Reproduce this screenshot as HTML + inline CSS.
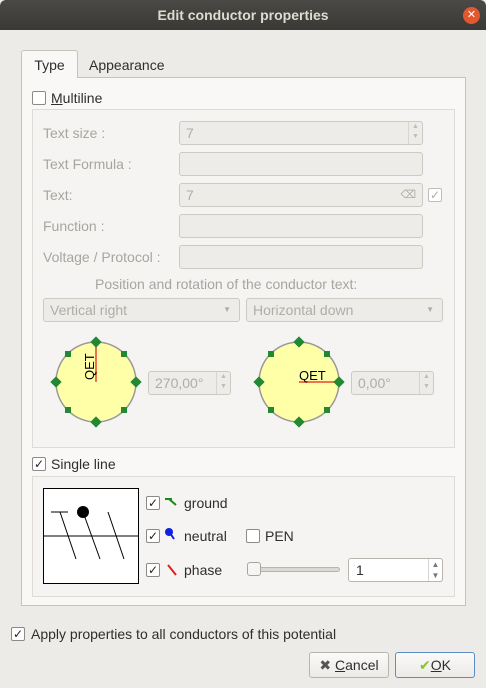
<!DOCTYPE html><html><head><style>
*{box-sizing:border-box;margin:0;padding:0}
body{width:486px;height:688px;background:#edebe8;font-family:"Liberation Sans","DejaVu Sans",sans-serif;font-size:13px;color:#2e2e2e;position:relative;overflow:hidden}
.a{position:absolute}
.title{left:0;top:0;width:486px;height:30px;background:linear-gradient(#4a4945,#3a3935);color:#dfdbd2;font-weight:bold;font-size:14px;text-align:center;line-height:30px;border-radius:6px 6px 0 0}
.close{left:463px;top:7px;width:17px;height:17px;border-radius:50%;background:#e4572e;color:#fff;font-size:11px;text-align:center;line-height:17px}
.panel{left:21px;top:77px;width:445px;height:529px;background:#faf8f6;border:1px solid #c6c2bc}
.tab{left:21px;top:50px;width:57px;height:28px;background:#faf8f6;border:1px solid #c6c2bc;border-bottom:none;border-radius:3px 3px 0 0;line-height:28px;text-align:center;font-size:14px}
.cb{width:14px;height:14px;border:1px solid #8c8a86;background:#fff;border-radius:2px;font-size:12px;line-height:12px;text-align:center;color:#222}
.grp{border:1px solid #dedad5;background:#f6f4f2}
.lbl{color:#a8a5a0;font-size:14px}
.fld{height:24px;border:1px solid #cdc9c3;background:#eeece9;border-radius:3px;color:#b0ada8;padding-left:6px;line-height:22px;font-size:14px}
.sp{position:absolute;right:0;top:0;width:14px;height:100%;border-left:1px solid #d8d4cf;font-size:7px;color:#c0bdb8;text-align:center;line-height:10px}
.btn{height:26px;border:1px solid #b8b4ae;background:linear-gradient(#fbfaf9,#eceae7);border-radius:3px;text-align:center;line-height:24px;font-size:14px}
.t{font-size:14px}
</style></head><body>
<div class="a title">Edit conductor properties</div>
<div class="a close">✕</div>
<div class="a panel"></div>
<div class="a tab">Type</div>
<div class="a t" style="left:89px;top:57px">Appearance</div>
<div class="a cb" style="left:32px;top:91px"></div>
<div class="a t" style="left:51px;top:90px"><u>M</u>ultiline</div>
<div class="a grp" style="left:32px;top:109px;width:423px;height:339px"></div>
<div class="a lbl" style="left:43px;top:125px">Text size :</div>
<div class="a fld" style="left:179px;top:121px;width:244px">7<div class="sp">▲<br>▼</div></div>
<div class="a lbl" style="left:43px;top:156px">Text Formula :</div>
<div class="a fld" style="left:179px;top:152px;width:244px"></div>
<div class="a lbl" style="left:43px;top:187px">Text:</div>
<div class="a fld" style="left:179px;top:183px;width:244px">7<span style="position:absolute;right:6px;font-size:11px">⌫</span></div>
<div class="a cb" style="left:428px;top:188px;border-color:#c0bdb8;color:#b0ada8">✓</div>
<div class="a lbl" style="left:43px;top:218px">Function :</div>
<div class="a fld" style="left:179px;top:214px;width:244px"></div>
<div class="a lbl" style="left:43px;top:249px">Voltage / Protocol :</div>
<div class="a fld" style="left:179px;top:245px;width:244px"></div>
<div class="a lbl" style="left:95px;top:276px">Position and rotation of the conductor text:</div>
<div class="a fld" style="left:43px;top:298px;width:197px">Vertical right<span style="position:absolute;right:8px;font-size:8px">▼</span></div>
<div class="a fld" style="left:246px;top:298px;width:197px">Horizontal down<span style="position:absolute;right:8px;font-size:8px">▼</span></div>
<svg class="a" style="left:50px;top:335px" width="300" height="95">
<circle cx="46" cy="47" r="40" fill="#ffffa8" stroke="#999" stroke-width="1.5"/>
<line x1="46" y1="7" x2="46" y2="47" stroke="#f07050" stroke-width="2"/>
<text x="0" y="0" transform="translate(44,45) rotate(-90)" font-size="13" font-family="Liberation Sans">QET</text>
<g fill="#228833"><rect x="42" y="3" width="8" height="8" transform="rotate(45 46 7)"/><rect x="42" y="83" width="8" height="8" transform="rotate(45 46 87)"/><rect x="2" y="43" width="8" height="8" transform="rotate(45 6 47)"/><rect x="82" y="43" width="8" height="8" transform="rotate(45 86 47)"/><rect x="15" y="16" width="6" height="6"/><rect x="71" y="16" width="6" height="6"/><rect x="15" y="72" width="6" height="6"/><rect x="71" y="72" width="6" height="6"/></g>
<circle cx="249" cy="47" r="40" fill="#ffffa8" stroke="#999" stroke-width="1.5"/>
<line x1="249" y1="47" x2="289" y2="47" stroke="#f07050" stroke-width="2"/>
<text x="249" y="45" font-size="13" font-family="Liberation Sans">QET</text>
<g fill="#228833"><rect x="245" y="3" width="8" height="8" transform="rotate(45 249 7)"/><rect x="245" y="83" width="8" height="8" transform="rotate(45 249 87)"/><rect x="205" y="43" width="8" height="8" transform="rotate(45 209 47)"/><rect x="285" y="43" width="8" height="8" transform="rotate(45 289 47)"/><rect x="218" y="16" width="6" height="6"/><rect x="274" y="16" width="6" height="6"/><rect x="218" y="72" width="6" height="6"/><rect x="274" y="72" width="6" height="6"/></g>
</svg>
<div class="a fld" style="left:148px;top:371px;width:83px">270,00°<div class="sp">▲<br>▼</div></div>
<div class="a fld" style="left:351px;top:371px;width:83px">0,00°<div class="sp">▲<br>▼</div></div>
<div class="a cb" style="left:32px;top:457px">✓</div>
<div class="a t" style="left:51px;top:456px">Single line</div>
<div class="a grp" style="left:32px;top:476px;width:423px;height:121px"></div>
<svg class="a" style="left:43px;top:488px" width="96" height="96">
<rect x="0.5" y="0.5" width="95" height="95" fill="#fff" stroke="#000"/>
<line x1="0" y1="48" x2="96" y2="48" stroke="#000"/>
<line x1="8" y1="24" x2="25" y2="24" stroke="#000"/>
<line x1="17" y1="24" x2="33" y2="71" stroke="#000"/>
<line x1="40" y1="24" x2="57" y2="71" stroke="#000"/>
<circle cx="40" cy="24" r="6" fill="#000"/>
<line x1="65" y1="24" x2="81" y2="71" stroke="#000"/>
</svg>
<div class="a cb" style="left:146px;top:496px">✓</div>
<svg class="a" style="left:164px;top:496px" width="14" height="12"><path d="M1 3H8M5 3L12 9" stroke="#1a8a1a" stroke-width="2" fill="none"/></svg>
<div class="a t" style="left:184px;top:495px">ground</div>
<div class="a cb" style="left:146px;top:529px">✓</div>
<svg class="a" style="left:164px;top:527px" width="14" height="16"><circle cx="5" cy="5" r="4" fill="#1020e0"/><path d="M6 6L10 12" stroke="#1020e0" stroke-width="2"/></svg>
<div class="a t" style="left:184px;top:528px">neutral</div>
<div class="a cb" style="left:246px;top:529px"></div>
<div class="a t" style="left:265px;top:528px">PEN</div>
<div class="a cb" style="left:146px;top:563px">✓</div>
<svg class="a" style="left:166px;top:563px" width="12" height="14"><path d="M2 2L10 12" stroke="#e02020" stroke-width="2"/></svg>
<div class="a t" style="left:184px;top:562px">phase</div>
<div class="a" style="left:250px;top:567px;width:90px;height:5px;border:1px solid #b8b4ae;border-radius:3px;background:#dcd9d5"></div>
<div class="a" style="left:247px;top:562px;width:14px;height:14px;border:1px solid #a8a4a0;border-radius:3px;background:#f6f5f3"></div>
<div class="a" style="left:348px;top:558px;width:95px;height:24px;border:1px solid #b8b4ae;border-radius:3px;background:#fff;padding-left:7px;line-height:22px;font-size:14px">1<div class="sp" style="color:#777;font-size:8px;line-height:11px">▲<br>▼</div></div>
<div class="a cb" style="left:11px;top:627px">✓</div>
<div class="a t" style="left:31px;top:626px">Apply properties to all conductors of this potential</div>
<div class="a btn" style="left:309px;top:652px;width:80px"><b style="color:#555">✖</b> <u>C</u>ancel</div>
<div class="a btn" style="left:395px;top:652px;width:80px;border-color:#5b8ec8"><span style="color:#8ac030;font-weight:bold">✔</span><u>O</u>K</div>
</body></html>
